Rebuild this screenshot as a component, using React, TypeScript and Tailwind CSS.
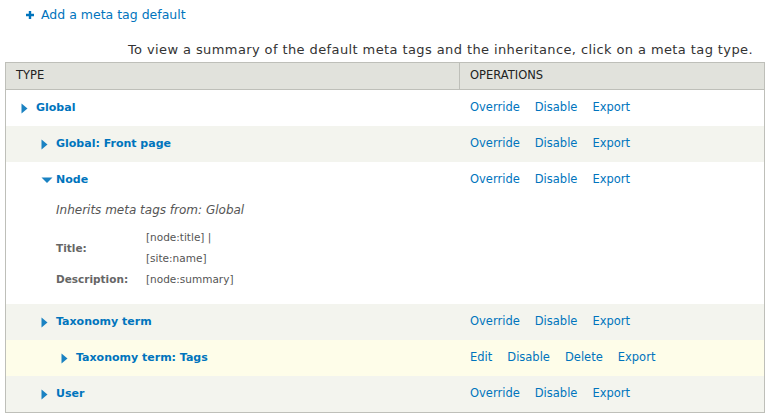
import React from 'react';

interface MetaRow {
  id: string;
  label: string;
  level: number;
  ops: string[];
  bg: string;
  expanded?: boolean;
}

const rows: MetaRow[] = [
  { id: 'global', label: 'Global', level: 0, ops: ['Override', 'Disable', 'Export'], bg: 'bg-white' },
  { id: 'front', label: 'Global: Front page', level: 1, ops: ['Override', 'Disable', 'Export'], bg: 'bg-[#f3f4ee]' },
  { id: 'node', label: 'Node', level: 1, ops: ['Override', 'Disable', 'Export'], bg: 'bg-white', expanded: true },
  { id: 'term', label: 'Taxonomy term', level: 1, ops: ['Override', 'Disable', 'Export'], bg: 'bg-[#f3f4ee]' },
  { id: 'tags', label: 'Taxonomy term: Tags', level: 2, ops: ['Edit', 'Disable', 'Delete', 'Export'], bg: 'bg-[#fefde9]' },
  { id: 'user', label: 'User', level: 1, ops: ['Override', 'Disable', 'Export'], bg: 'bg-[#f3f4ee]' },
];

const indent = ['pl-[15px]', 'pl-[35px]', 'pl-[55px]'];

function Arrow({ open }: { open?: boolean }) {
  if (open) {
    return (
      <svg width="12" height="8" viewBox="0 0 12 8" className="shrink-0">
        <path d="M0.5 1.5h11L6 7z" fill="#1a82c2" />
      </svg>
    );
  }
  return (
    <svg width="12" height="11" viewBox="0 0 12 11" className="shrink-0">
      <path d="M0.5 0.5v10l6-5z" fill="#1a82c2" />
    </svg>
  );
}

function NodeDetails() {
  return (
    <div className="pl-[50px] pb-[14px] pt-[3px]">
      <p className="italic text-[12px] text-[#555] leading-[18px]">Inherits meta tags from: Global</p>
      <div className="mt-[8px] grid grid-cols-[90px_1fr] text-[10.5px] leading-[21px] text-[#555]">
        <div className="font-bold flex items-center text-[#666]">Title:</div>
        <div>
          <div>[node:title] |</div>
          <div>[site:name]</div>
        </div>
        <div className="font-bold text-[#666]">Description:</div>
        <div>[node:summary]</div>
      </div>
    </div>
  );
}

export default function App() {
  return (
    <div className="w-[770px] h-[418px] bg-white overflow-hidden text-[#333] font-['DejaVu_Sans',sans-serif]">
      <div className="pl-[26px] pt-[6px] h-[38px] flex items-start">
        <a className="flex items-center gap-[7px] text-[#0074bd] text-[12.5px] leading-[18px]">
          <svg width="8" height="8" viewBox="0 0 8 8">
            <path d="M2.8 0h2.4v2.8H8v2.4H5.2V8H2.8V5.2H0V2.8h2.8z" fill="#0074bd" />
          </svg>
          Add a meta tag default
        </a>
      </div>
      <p className="text-[13px] tracking-[0.4px] leading-[18px] text-right pr-[17px] h-[24px] pt-[3px]">
        To view a summary of the default meta tags and the inheritance, click on a meta tag type.
      </p>
      <div className="mx-[5px] border border-[#bebfb9]">
        <div className="flex h-[27px] bg-[#e1e2dc] border-b border-[#bebfb9] text-[11.5px] text-[#222]">
          <div className="w-[454px] pl-[10px] flex items-center border-r border-[#bebfb9]">TYPE</div>
          <div className="pl-[10px] flex items-center">OPERATIONS</div>
        </div>
        {rows.map((row) => (
          <div key={row.id} className={row.bg}>
            <div className="flex h-[36px] items-center">
              <div className={`w-[455px] flex items-center gap-[3px] ${indent[row.level]}`}>
                <Arrow open={row.expanded} />
                <a className="font-bold text-[#0074bd] text-[11px]">{row.label}</a>
              </div>
              <div className="pl-[9px] flex gap-[15px] text-[11.5px] text-[#0074bd]">
                {row.ops.map((op) => (
                  <a key={op}>{op}</a>
                ))}
              </div>
            </div>
            {row.expanded && <NodeDetails />}
          </div>
        ))}
      </div>
    </div>
  );
}
